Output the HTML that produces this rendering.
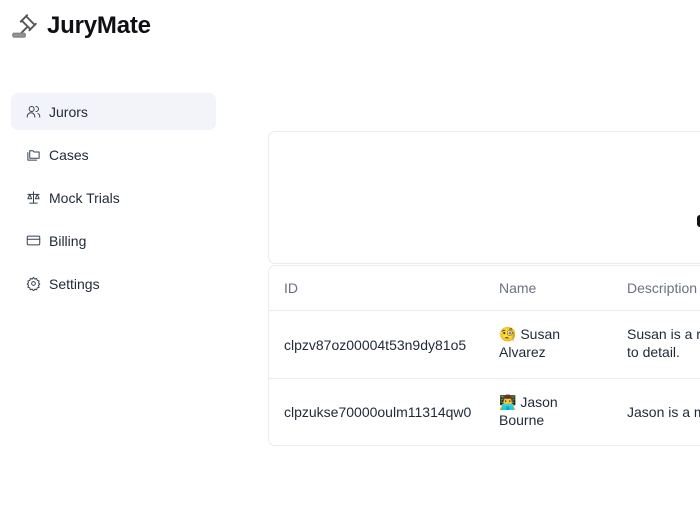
<!DOCTYPE html>
<html><head><meta charset="utf-8"><style>
*{margin:0;padding:0;box-sizing:border-box}
body{width:700px;height:525px;overflow:hidden;background:#fff;font-family:"Liberation Sans","Noto Sans CJK SC",sans-serif;color:#111827;position:relative}
.logo{position:absolute;left:12px;top:12px;display:flex;align-items:center;gap:9px}
.logo span{font-size:24px;font-weight:700;letter-spacing:-0.2px;color:#0f0f14}
.nav{position:absolute;left:11px;top:93px;width:205px}
.item{height:37px;margin-bottom:6px;border-radius:7px;display:flex;align-items:center;padding-left:15px;gap:8px;font-size:14px;color:#1f2937}
.item.act{background:#f3f4f9}
.item svg{width:15px;height:15px;stroke:#374151;fill:none;stroke-width:1.6;stroke-linecap:round;stroke-linejoin:round}
.card{position:absolute;left:268px;width:460px;border:1px solid #ececf0;border-radius:7px;background:#fff}
.c1{top:131px;height:133px}
.c2{top:265px;height:181px}
.row{position:absolute;left:0;right:0;border-bottom:1px solid #ececf0;font-size:14px;color:#1f2937}
.row div{position:absolute}
.h{top:0;height:45px;color:#6b7280}
.cell{line-height:18px}
.dot{position:absolute;left:428px;top:83px;width:6px;height:12px;background:#111;border-radius:3px 0 0 3px}
</style></head><body>
<div class="logo">
<svg width="26" height="26" viewBox="0 0 24 24" fill="none" stroke="#555" stroke-width="1.7" stroke-linecap="round" stroke-linejoin="round"><path d="M14 13l-5.5 5.5"/><path d="M16 16l6-6"/><path d="M8 8l6-6"/><path d="M9 7l8 8"/><path d="M21 11l-8-8"/><rect x="1" y="19" width="11" height="3" rx="1" fill="#999" stroke="#888"/></svg>
<span>JuryMate</span></div>
<div class="nav">
<div class="item act"><svg viewBox="0 0 24 24"><circle cx="9" cy="8" r="4"/><path d="M2 21v-1a6 6 0 0 1 12 0v1"/><path d="M16 4a4 4 0 0 1 0 8"/><path d="M19 15a6 6 0 0 1 3 5v1"/></svg>Jurors</div>
<div class="item"><svg viewBox="0 0 24 24"><path d="M6 6h5l2 2h8v10H6z"/><path d="M3 9v12h14"/></svg>Cases</div>
<div class="item"><svg viewBox="0 0 24 24"><path d="M12 3v18M6 21h12M3 7h18M6 7l-3 7h6zM18 7l-3 7h6z"/></svg>Mock Trials</div>
<div class="item"><svg viewBox="0 0 24 24"><rect x="2" y="5" width="20" height="14" rx="2"/><path d="M2 10h20"/></svg>Billing</div>
<div class="item"><svg viewBox="0 0 24 24"><circle cx="12" cy="12" r="3"/><path d="M12 2l2 3 3-1 1 3 3 1-1 3 2 2-2 2 1 3-3 1-1 3-3-1-2 3-2-3-3 1-1-3-3-1 1-3-2-2 2-2-1-3 3-1 1-3 3 1z"/></svg>Settings</div>
</div>
<div class="card c1"><div class="dot"></div></div>
<div class="card c2">
<div class="row h"><div style="left:15px;top:14px">ID</div><div style="left:230px;top:14px">Name</div><div style="left:358px;top:14px">Description</div></div>
<div class="row" style="top:45px;height:68px"><div class="cell" style="left:15px;top:25px">clpzv87oz00004t53n9dy81o5</div><div class="cell" style="left:230px;top:14px">🧐 Susan<br>Alvarez</div><div class="cell" style="left:358px;top:14px;white-space:nowrap">Susan is a rea<br>to detail.</div></div>
<div class="row" style="top:113px;height:67px;border-bottom:none"><div class="cell" style="left:15px;top:24px">clpzukse70000oulm11314qw0</div><div class="cell" style="left:230px;top:14px">👨‍💻 Jason<br>Bourne</div><div class="cell" style="left:358px;top:24px;white-space:nowrap">Jason is a ma</div></div>
</div>
</body></html>
